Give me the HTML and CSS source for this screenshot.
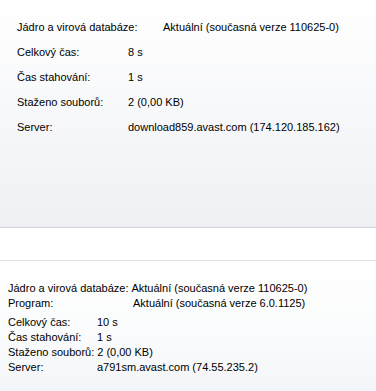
FILE: index.html
```html
<!DOCTYPE html>
<html lang="cs">
<head>
    <meta charset="UTF-8">
    <title>Aktualizace</title>
    <link rel="stylesheet" href="styles.css">
</head>
<body>
    <div class="panel panel-top">
        <div class="row row-wide">
            <span class="label">Jádro a virová databáze:</span>
            <span class="value">Aktuální (současná verze 110625-0)</span>
        </div>
        <div class="row">
            <span class="label">Celkový čas:</span>
            <span class="value">8 s</span>
        </div>
        <div class="row">
            <span class="label">Čas stahování:</span>
            <span class="value">1 s</span>
        </div>
        <div class="row">
            <span class="label">Staženo souborů:</span>
            <span class="value">2 (0,00 KB)</span>
        </div>
        <div class="row">
            <span class="label">Server:</span>
            <span class="value">download859.avast.com (174.120.185.162)</span>
        </div>
    </div>

    <div class="gap"></div>

    <div class="panel panel-bottom">
        <div class="line">
            <span class="label-auto">Jádro a virová databáze:</span>
            <span>Aktuální (současná verze 110625-0)</span>
        </div>
        <div class="line line-program">
            <span class="label-prog">Program:</span>
            <span>Aktuální (současná verze 6.0.1125)</span>
        </div>
        <div class="line">
            <span class="label-small">Celkový čas:</span>
            <span>10 s</span>
        </div>
        <div class="line">
            <span class="label-small">Čas stahování:</span>
            <span>1 s</span>
        </div>
        <div class="line">
            <span class="label-auto">Staženo souborů:</span>
            <span>2 (0,00 KB)</span>
        </div>
        <div class="line">
            <span class="label-small">Server:</span>
            <span>a791sm.avast.com (74.55.235.2)</span>
        </div>
    </div>
</body>
</html>
```

FILE: styles.css
```css
html, body{
    margin: 0;
    padding: 0;
    width: 100%;
    height: 100%;
    overflow: hidden;
}
body{
    font-family: "Liberation Sans", Arial, sans-serif;
    font-size: 11px;
    color: #000;
    background-color: #fff;
}

/* horni panel */
.panel-top{
    height: 212px;
    padding: 15px 0 0 17px;
    background: linear-gradient(to bottom, #ffffff 0%, #f7f8fa 50%, #eef0f4 100%);
    border-bottom: 1px solid #d3d5d9;
}
.row{
    display: flex;
    line-height: 25px;
    white-space: nowrap;
}
.row .label{
    width: 111px;
    flex-shrink: 0;
}
.row-wide .label{
    width: 146px;
}

.gap{
    height: 32px;
    background-color: #fff;
    border-bottom: 1px solid #e1e1e1;
}

/* dolni panel */
.panel-bottom{
    height: 110px;
    padding: 20px 0 0 8px;
    background: linear-gradient(to bottom, #ffffff 0%, #fafbfc 60%, #f4f5f8 100%);
}
.line{
    display: flex;
    line-height: 15px;
    white-space: nowrap;
}
.line-program{
    margin-bottom: 4px;
}
.label-auto{
    margin-right: 3px;
}
.label-prog{
    width: 125px;
    flex-shrink: 0;
}
.label-small{
    width: 89px;
    flex-shrink: 0;
}
```
